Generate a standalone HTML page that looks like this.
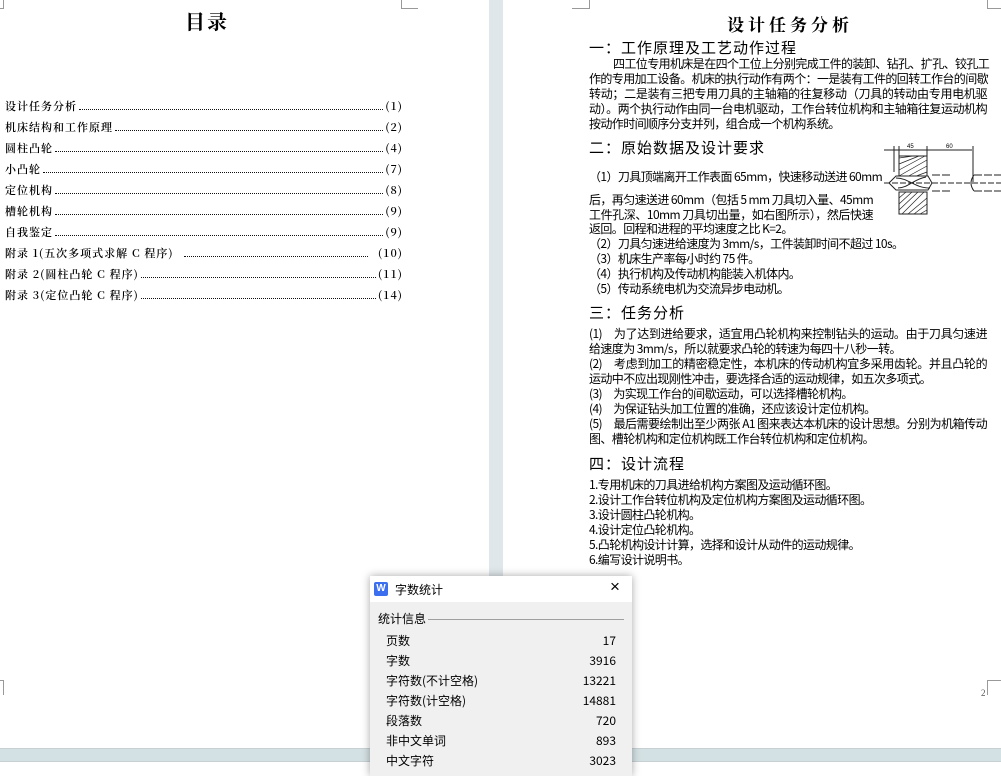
<!DOCTYPE html>
<html><head><meta charset="utf-8"><style>
*{margin:0;padding:0;box-sizing:border-box}
body{width:1001px;height:770px;overflow:hidden;background:#fff;position:relative;font-family:"Liberation Serif","Noto Serif CJK SC","Noto Sans CJK SC",serif;color:#000}
.a{position:absolute;white-space:nowrap}
.toc{position:absolute;font-family:"Noto Serif CJK SC",serif;font-weight:600;font-size:11px;left:5px;width:398px;display:flex;align-items:center;height:14px;white-space:nowrap;letter-spacing:1px}
.toc .d{flex:1;border-bottom:1.5px dotted #111;margin:0 2px;height:7px}
.ln{position:absolute;left:589px;width:398px;font-size:12px;line-height:15px;font-family:"Noto Sans CJK SC",sans-serif;text-align:justify;text-align-last:justify;white-space:nowrap;letter-spacing:-0.6px}
.nl{text-align-last:left}
.h{position:absolute;left:589px;font-size:15px;font-family:"Noto Sans CJK SC",sans-serif;letter-spacing:1px;white-space:nowrap}
.dlg{position:absolute;left:370px;top:576px;width:262px;height:200px;background:#f0f0f0;box-shadow:0 0 8px rgba(0,0,0,.35);font-family:"Noto Sans CJK SC",sans-serif;font-size:12px}
.row{position:absolute;left:16px;width:230px;display:flex;justify-content:space-between}
</style></head><body>
<div class="a" style="left:489px;top:0;width:14px;height:748px;background:#dfe7ea"></div>
<div class="a" style="left:0;top:748px;width:1001px;height:14px;background:#d4e1e4;border-top:1px solid #c8d0d4;border-bottom:1px solid #c8d0d4"></div>
<div class="a" style="left:0;top:0;width:4px;height:9px;border-right:1px solid #999;border-bottom:1px solid #999"></div>
<div class="a" style="left:401px;top:0;width:17px;height:9px;border-left:1px solid #999;border-bottom:1px solid #999"></div>
<div class="a" style="left:572px;top:0;width:18px;height:9px;border-right:1px solid #999;border-bottom:1px solid #999"></div>
<div class="a" style="left:987px;top:0;width:14px;height:9px;border-left:1px solid #999;border-bottom:1px solid #999"></div>
<div class="a" style="left:0;top:680px;width:4px;height:15px;border-right:1px solid #999;border-top:1px solid #999"></div>
<div class="a" style="left:987px;top:680px;width:14px;height:15px;border-left:1px solid #999;border-top:1px solid #999"></div>
<div class="a" style="left:981px;top:688px;font-size:9px;color:#555">2</div>

<div class="a" style="left:185px;top:6px;font-size:20px;font-weight:bold;font-family:'Noto Serif CJK SC',serif;letter-spacing:2px">目录</div>
<div class="toc" style="top:99px"><span>设计任务分析</span><span class="d"></span><span>(1)</span></div>
<div class="toc" style="top:120px"><span>机床结构和工作原理</span><span class="d"></span><span>(2)</span></div>
<div class="toc" style="top:141px"><span>圆柱凸轮</span><span class="d"></span><span>(4)</span></div>
<div class="toc" style="top:162px"><span>小凸轮</span><span class="d"></span><span>(7)</span></div>
<div class="toc" style="top:183px"><span>定位机构</span><span class="d"></span><span>(8)</span></div>
<div class="toc" style="top:204px"><span>槽轮机构</span><span class="d"></span><span>(9)</span></div>
<div class="toc" style="top:225px"><span>自我鉴定</span><span class="d"></span><span>(9)</span></div>
<div class="toc" style="top:246px"><span>附录 1(五次多项式求解 C 程序)</span><span class="d" style="margin:0 10px"></span><span>(10)</span></div>
<div class="toc" style="top:267px"><span>附录 2(圆柱凸轮 C 程序)</span><span class="d"></span><span>(11)</span></div>
<div class="toc" style="top:288px"><span>附录 3(定位凸轮 C 程序)</span><span class="d"></span><span>(14)</span></div>

<div class="a" style="left:727px;top:11px;font-size:17px;font-weight:bold;font-family:'Noto Serif CJK SC',serif;letter-spacing:4px">设计任务分析</div>
<div class="h" style="top:37px">一：工作原理及工艺动作过程</div>
<div class="ln" style="top:56px;padding-left:24px">四工位专用机床是在四个工位上分别完成工件的装卸、钻孔、扩孔、铰孔工</div>
<div class="ln" style="top:71px">作的专用加工设备。机床的执行动作有两个：一是装有工件的回转工作台的间歇</div>
<div class="ln" style="top:86px">转动；二是装有三把专用刀具的主轴箱的往复移动（刀具的转动由专用电机驱</div>
<div class="ln" style="top:101px">动）。两个执行动作由同一台电机驱动，工作台转位机构和主轴箱往复运动机构</div>
<div class="ln nl" style="top:116px">按动作时间顺序分支并列，组合成一个机构系统。</div>
<div class="h" style="top:137px">二：原始数据及设计要求</div>
<div class="ln" style="top:169px;width:284px">（1）刀具顶端离开工作表面 65mm，快速移动送进 60mm</div>
<div class="ln" style="top:192px;width:284px">后，再匀速送进 60mm（包括 5 mm 刀具切入量、45mm</div>
<div class="ln" style="top:207px;width:284px">工件孔深、10mm 刀具切出量，如右图所示），然后快速</div>
<div class="ln nl" style="top:221px">返回。回程和进程的平均速度之比 K=2。</div>
<div class="ln nl" style="top:236px">（2）刀具匀速进给速度为 3mm/s，工件装卸时间不超过 10s。</div>
<div class="ln nl" style="top:251px">（3）机床生产率每小时约 75 件。</div>
<div class="ln nl" style="top:266px">（4）执行机构及传动机构能装入机体内。</div>
<div class="ln nl" style="top:281px">（5）传动系统电机为交流异步电动机。</div>
<svg class="a" style="left:884px;top:142px" width="117" height="76" viewBox="0 0 117 76">
<g stroke="#222" fill="none" stroke-width="1">
<line x1="0" y1="8" x2="88" y2="8"/><line x1="10" y1="4" x2="10" y2="30"/><line x1="15" y1="4" x2="15" y2="30"/><line x1="43" y1="4" x2="43" y2="30"/><line x1="89" y1="4" x2="89" y2="40"/>
<rect x="15" y="14" width="28" height="22"/><rect x="15" y="50" width="28" height="22"/>
<path d="M15 16 L29 14 M15 22 L35 14 M15 28 L41 14 M15 34 L43 18 M21 36 L43 24 M27 36 L43 30 M15 56 L22 50 M15 62 L28 50 M15 68 L34 50 M18 72 L40 50 M24 72 L43 56 M30 72 L43 62 M36 72 L43 68" stroke-width=".7"/>
<path d="M5 41 L12 34 L44 34 L48 41 L44 48 L12 48 Z" fill="#fff"/>
<path d="M12 36 C25 36 30 46 46 46 M14 46 C24 46 30 37 42 35"/>
<line x1="0" y1="41" x2="117" y2="41" stroke-dasharray="6 2"/>
<path d="M48 33 H68 M48 49 H68 M90 33 H117 M90 49 H117" stroke-dasharray="8 2"/>
<path d="M90 33 Q84 41 90 49"/>
</g>
<text x="23" y="6" font-size="6" font-family="Liberation Sans">45</text><text x="62" y="6" font-size="6" font-family="Liberation Sans">60</text>
</svg>
<div class="h" style="top:302px">三：任务分析</div>
<div class="ln" style="top:326px">(1)　为了达到进给要求，适宜用凸轮机构来控制钻头的运动。由于刀具匀速进</div>
<div class="ln nl" style="top:341px">给速度为 3mm/s，所以就要求凸轮的转速为每四十八秒一转。</div>
<div class="ln" style="top:356px">(2)　考虑到加工的精密稳定性，本机床的传动机构宜多采用齿轮。并且凸轮的</div>
<div class="ln nl" style="top:371px">运动中不应出现刚性冲击，要选择合适的运动规律，如五次多项式。</div>
<div class="ln nl" style="top:386px">(3)　为实现工作台的间歇运动，可以选择槽轮机构。</div>
<div class="ln nl" style="top:401px">(4)　为保证钻头加工位置的准确，还应该设计定位机构。</div>
<div class="ln" style="top:416px">(5)　最后需要绘制出至少两张 A1 图来表达本机床的设计思想。分别为机箱传动</div>
<div class="ln nl" style="top:431px">图、槽轮机构和定位机构既工作台转位机构和定位机构。</div>
<div class="h" style="top:453px">四：设计流程</div>
<div class="ln nl" style="top:477px">1.专用机床的刀具进给机构方案图及运动循环图。</div>
<div class="ln nl" style="top:492px">2.设计工作台转位机构及定位机构方案图及运动循环图。</div>
<div class="ln nl" style="top:507px">3.设计圆柱凸轮机构。</div>
<div class="ln nl" style="top:522px">4.设计定位凸轮机构。</div>
<div class="ln nl" style="top:537px">5.凸轮机构设计计算，选择和设计从动件的运动规律。</div>
<div class="ln nl" style="top:552px">6.编写设计说明书。</div>

<div class="dlg">
<div class="a" style="left:0;top:0;width:262px;height:26px;background:#fff"></div>
<div class="a" style="left:4px;top:6px;width:14px;height:14px;background:#3b6ff0;border-radius:2px;color:#fff;font:bold 10px 'Liberation Sans',sans-serif;text-align:center;line-height:14px">W</div>
<div class="a" style="left:25px;top:5px">字数统计</div>
<div class="a" style="left:240px;top:1px;font-size:17px;font-family:'Liberation Sans',sans-serif;font-weight:300">×</div>
<div class="a" style="left:8px;top:34px">统计信息</div>
<div class="a" style="left:58px;top:43px;width:196px;border-top:1px solid #a0a0a0"></div>
<div class="row" style="top:56px"><span>页数</span><span>17</span></div>
<div class="row" style="top:76px"><span>字数</span><span>3916</span></div>
<div class="row" style="top:96px"><span>字符数(不计空格)</span><span>13221</span></div>
<div class="row" style="top:116px"><span>字符数(计空格)</span><span>14881</span></div>
<div class="row" style="top:136px"><span>段落数</span><span>720</span></div>
<div class="row" style="top:156px"><span>非中文单词</span><span>893</span></div>
<div class="row" style="top:176px"><span>中文字符</span><span>3023</span></div>
</div>
</body></html>
